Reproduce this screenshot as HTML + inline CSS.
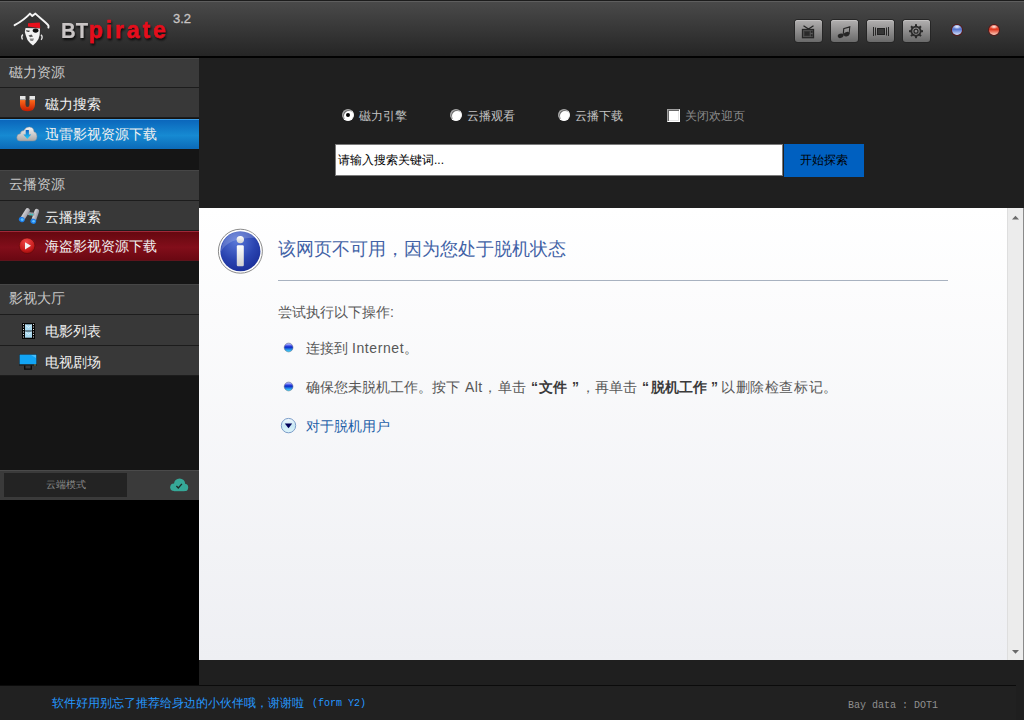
<!DOCTYPE html>
<html><head><meta charset="utf-8">
<style>
*{margin:0;padding:0;box-sizing:border-box}
html,body{width:1024px;height:720px;overflow:hidden;background:#1f1f1f;font-family:"Liberation Sans",sans-serif}
.a{position:absolute}
#title{left:0;top:0;width:1024px;height:56px;background:linear-gradient(#4a4a4a,#252525);border-top:1px solid #1c1c1c}
#title:before{content:"";position:absolute;left:0;top:0;right:0;height:1px;background:#5e5e5e}
#tline{left:0;top:56px;width:1024px;height:2px;background:#020202}
.btn{top:20px;width:27px;height:22px;border-radius:3px;background:linear-gradient(#b2b0b0,#6a6a6a);box-shadow:0 0 0 1px #262626,inset 0 1px 0 #c4c2c2}
.dot{width:10px;height:10px;border-radius:50%;top:25px}
#side{left:0;top:58px;width:199px;height:627px;background:#151515}
.hd{left:0;width:199px;height:30px;background:#3a3a3a;color:#c8c8c8;font-size:14px;line-height:27px;padding-left:9px;border-bottom:1px solid #1c1c1c;border-top:1px solid #464646}
.it{left:0;width:199px;height:30px;background:#383838;color:#f0f0f0;font-size:14px;font-weight:500;line-height:32px;padding-left:45px;border-bottom:1px solid #1c1c1c}
.ic{position:absolute;left:16px;top:7px}
#search{left:199px;top:58px;width:825px;height:150px;background:#1f1f1f}
.rad{width:12px;height:12px;border-radius:50%;background:#fff;border:1px solid;border-color:#a0a0a0 #f4f4f4 #fff #a0a0a0;box-shadow:inset 1px 1px 0 #6e6e6e;top:109px}
.lbl{top:109px;font-size:12px;color:#c4c4c4;line-height:14px}
#content{left:199px;top:208px;width:808px;height:452px;background:linear-gradient(#ffffff,#eeeff3)}
#scroll{left:1007px;top:208px;width:16px;height:452px;background:#ececec;border-left:1px solid #dedede}
#redge{left:1023px;top:208px;width:1px;height:452px;background:#8a8a8a}
.t14{font-size:14px;line-height:18px;color:#575757;white-space:nowrap}
.bq{font-weight:bold;color:#3a3a3a}
#status{left:0;top:685px;width:1016px;height:35px;background:#212121;border-top:1px solid #0b0b0b}
</style></head><body>
<div id="title" class="a"></div>
<div id="tline" class="a"></div>
<svg class="a" style="left:0;top:0" width="200" height="56" viewBox="0 0 200 56">
<defs><filter id="sh" x="-20%" y="-20%" width="140%" height="160%"><feDropShadow dx="1" dy="2" stdDeviation="1.2" flood-color="#000" flood-opacity="0.8"/></filter></defs>
<path d="M17,24.5 C21,22 26,18.5 30,15 L32.4,17.4 L35.4,15 C40,19 44,22 47,25.5 L40.5,30 L26,29 Z" fill="#343434"/>
<path d="M14.6,25.2 C19.5,22.5 25.5,18.5 30,13.6 L32.3,16 L35.4,13.6 C39.5,17.5 44.5,21.3 48,25 Q48.9,26 48.4,27.6" fill="none" stroke="#f4f4f4" stroke-width="1.9" stroke-linejoin="round" stroke-linecap="round"/>
<path d="M28,23.2 L39.8,22.6 L40.3,28.2 L28,26.6 Z" fill="#e8101c"/>
<path d="M25.5,28 L40,28.6 L39.6,35 L38.5,39 L36,42.5 L33,45.5 L30,43 L27.5,40 L26,36 L24.8,32 Z" fill="#f2f2f2"/>
<ellipse cx="35.6" cy="30.6" rx="2.9" ry="2.1" fill="#101010"/>
<path d="M26,30.2 L30,30.8 L29,32 L26.5,31.5Z" fill="#333"/>
<path d="M28.5,35.5 L31.5,34.5 L33,36.5 L30,37.2Z" fill="#555"/>
<path d="M29.5,38.5 L34,38.5 L33,41 L30.5,41Z" fill="#888"/>
<path d="M22.8,34.5 Q20.8,36.5 22.5,39.5" fill="none" stroke="#e8e8e8" stroke-width="1.3"/>
<path d="M41,34.8 Q43.2,37 41.2,39.8" fill="none" stroke="#e8e8e8" stroke-width="1.3"/>
<g filter="url(#sh)" font-family="Liberation Sans" font-weight="bold">
<text x="61" y="38" font-size="22" fill="#c9c5c5" textLength="27" lengthAdjust="spacingAndGlyphs">BT</text>
<text x="89" y="38" font-size="23" fill="#e5101c" stroke="#e5101c" stroke-width="0.5" textLength="77" lengthAdjust="spacing">pirate</text>
</g>
<text x="173" y="23" font-size="13" font-family="Liberation Sans" fill="#c8c4c4" stroke="#c8c4c4" stroke-width="0.3">3.2</text>
</svg>

<div class="a btn" style="left:795px"></div>
<div class="a btn" style="left:831px"></div>
<div class="a btn" style="left:867px"></div>
<div class="a btn" style="left:903px"></div>
<svg class="a" style="left:795px;top:20px" width="140" height="22" viewBox="795 20 140 22">
<g fill="#262626" stroke="#262626">
<path d="M803.5,25.8 L808.5,29 L813.5,25.8" fill="none" stroke-width="1.3"/>
<rect x="802.5" y="29.5" width="11" height="8.2" fill="#5a5a5a" stroke-width="1.3"/>
<rect x="804.2" y="31.2" width="5.6" height="4.8" stroke="#3a3a3a" stroke-width="0.8" fill="#2a2a2a"/>
<rect x="810.8" y="30.8" width="1.8" height="2" stroke="none"/>
<rect x="810.8" y="34.2" width="1.8" height="2.2" stroke="none"/>
</g>
<g fill="#262626">
<ellipse cx="840.6" cy="35.8" rx="2.9" ry="2.2" transform="rotate(-20 840.6 35.8)"/>
<ellipse cx="846.6" cy="34.2" rx="2.9" ry="2.2" transform="rotate(-20 846.6 34.2)"/>
<path d="M842.6,35.6 L843.2,28.2 L850.4,26 L849.6,34 L848.6,34 L849.2,27.8 L844.3,29 L843.7,35.6Z"/>
</g>
<g fill="#262626">
<rect x="873" y="27" width="1" height="9"/><rect x="875" y="27.5" width="1" height="8"/>
<rect x="886" y="27.5" width="1" height="8"/><rect x="888" y="27" width="1" height="9"/>
<rect x="877.5" y="28.5" width="7" height="6" fill="#363636" stroke="#222" stroke-width="1"/>
</g>
<g transform="translate(916 31.2)" fill="#2a2a2a">
<g id="tooth"><rect x="-1" y="-7" width="2" height="3"/></g>
<use href="#tooth" transform="rotate(45)"/><use href="#tooth" transform="rotate(90)"/><use href="#tooth" transform="rotate(135)"/>
<use href="#tooth" transform="rotate(180)"/><use href="#tooth" transform="rotate(225)"/><use href="#tooth" transform="rotate(270)"/><use href="#tooth" transform="rotate(315)"/>
<circle r="4.6" fill="none" stroke="#2a2a2a" stroke-width="1.8"/>
<circle r="2" fill="none" stroke="#2a2a2a" stroke-width="1.3"/>
</g>
</svg>
<div class="a dot" style="left:952px;background:radial-gradient(ellipse 40% 22% at 50% 18%,#f4f6ff,transparent),linear-gradient(#8aa2e8,#5a78d0 45%,#d8e0f8);box-shadow:0 0 0 1px #5a1818"></div>
<div class="a dot" style="left:989px;background:radial-gradient(ellipse 40% 22% at 50% 18%,#fff0ea,transparent),linear-gradient(#f06048,#e03a22 45%,#ffd0c0);box-shadow:0 0 0 1px #5a1818"></div>

<div id="side" class="a"></div>
<div class="a hd" style="top:58px;height:30px">磁力资源</div>
<div class="a it" style="top:88px">磁力搜索</div>
<div class="a it" style="top:118px;background:linear-gradient(#0a64ba,#168ad2 55%,#0c6ab8);box-shadow:inset 0 1px 0 #3e9ee6;border-bottom:none;border-top:1px solid #141414;height:31px;line-height:30px">迅雷影视资源下载</div>
<div class="a hd" style="top:170px;height:31px">云播资源</div>
<div class="a it" style="top:201px">云播搜索</div>
<div class="a it" style="top:231px;background:linear-gradient(#660810,#820e1a 55%,#6a0812);border-bottom:1px solid #5e141c;border-top:1px solid #a02838;height:30px;line-height:28px">海盗影视资源下载</div>
<div class="a hd" style="top:284px;height:31px">影视大厅</div>
<div class="a it" style="top:315px;height:31px">电影列表</div>
<div class="a it" style="top:346px">电视剧场</div>

<div class="a" style="left:0;top:470px;width:199px;height:30px;background:#3a3a3a;border-top:1px solid #4a4a4a"></div>
<div class="a" style="left:4px;top:473px;width:123px;height:24px;background:#232323;color:#8a8a8a;font-size:10px;line-height:24px;text-align:center">云端模式</div>
<div class="a" style="left:0;top:500px;width:199px;height:185px;background:#000"></div>

<svg class="a" style="left:0;top:58px" width="199" height="450" viewBox="0 58 199 450">
<defs>
<linearGradient id="mg" x1="0" y1="0" x2="0" y2="1"><stop offset="0" stop-color="#ff6a1a"/><stop offset="1" stop-color="#c41a00"/></linearGradient>
<linearGradient id="cg" x1="0" y1="0" x2="0" y2="1"><stop offset="0" stop-color="#f4f4f4"/><stop offset="1" stop-color="#a8a8a8"/></linearGradient>
<linearGradient id="ag" x1="0" y1="0" x2="0" y2="1"><stop offset="0" stop-color="#1060c0"/><stop offset="1" stop-color="#20d0ff"/></linearGradient>
<radialGradient id="pg" cx="0.45" cy="0.25" r="0.8"><stop offset="0" stop-color="#f04848"/><stop offset="0.7" stop-color="#c41a1a"/><stop offset="1" stop-color="#8a0a0a"/></radialGradient>
<linearGradient id="bg" x1="0" y1="0" x2="1" y2="1"><stop offset="0" stop-color="#e8e8e8"/><stop offset="1" stop-color="#8a8a96"/></linearGradient>
</defs>
<!-- magnet -->
<path d="M20,100 L25.5,100 L25.5,104.5 Q25.5,107 27.5,107 Q29.5,107 29.5,104.5 L29.5,100 L35,100 L35,104.5 Q35,111.2 27.5,111.2 Q20,111.2 20,104.5Z" fill="url(#mg)"/>
<rect x="20" y="96" width="5.5" height="4" fill="#e6e6e6"/><rect x="29.5" y="96" width="5.5" height="4" fill="#e6e6e6"/>
<rect x="20" y="99.2" width="5.5" height="0.9" fill="#9a9a9a"/><rect x="29.5" y="99.2" width="5.5" height="0.9" fill="#9a9a9a"/>
<!-- cloud -->
<path d="M20,141 Q16.8,141 16.8,137.5 Q16.8,134 20.3,133.8 Q20.8,130.6 24,130.6 Q25.5,126.8 29.5,127 Q33.8,127.3 34,131.8 Q37,132.5 37,136.5 Q37,141 33,141Z" fill="url(#cg)" stroke="#7a8a9a" stroke-width="0.5"/>
<path d="M25.7,130 L28.9,130 L28.9,134.4 L31.2,134.4 L27.3,139 L23.4,134.4 L25.7,134.4Z" fill="url(#ag)"/>
<!-- binoculars -->
<g>
<path d="M27.6,210.5 L22.4,218.8" stroke="url(#bg)" stroke-width="4.6" stroke-linecap="round"/>
<path d="M36.8,211.2 L33.6,220.6" stroke="url(#bg)" stroke-width="4.6" stroke-linecap="round"/>
<path d="M28,213.5 L34.5,214.2" stroke="#9a9aa4" stroke-width="3"/>
<circle cx="30.2" cy="214.4" r="0.9" fill="#30c8c0"/><circle cx="32.4" cy="214.7" r="0.9" fill="#30c8c0"/>
<ellipse cx="21.8" cy="219.5" rx="3" ry="2.6" fill="#1e7ee8" transform="rotate(30 21.8 219.5)"/>
<ellipse cx="22.2" cy="219.6" rx="1.5" ry="1.3" fill="#60c0ff"/>
<ellipse cx="33.3" cy="221.2" rx="2.9" ry="2.6" fill="#1e7ee8" transform="rotate(15 33.3 221.2)"/>
<ellipse cx="33.6" cy="221.3" rx="1.4" ry="1.3" fill="#60c0ff"/>
</g>
<!-- play -->
<circle cx="27.1" cy="245.8" r="7.8" fill="url(#pg)" stroke="#5a0808" stroke-width="0.6"/>
<path d="M25,242.2 L25,249.4 L31,245.8Z" fill="#f4f4f4"/>
<!-- film -->
<rect x="22" y="323" width="13" height="16" fill="#050505"/>
<rect x="25" y="324.3" width="7" height="6.3" fill="#a8d8ee"/><rect x="25" y="331.4" width="7" height="6.3" fill="#a8d8ee"/>
<path d="M25.5,325 L28.5,327.5 L31.5,325 M25.5,332 L28.5,334.5 L31.5,332" stroke="#eaf6ff" stroke-width="0.8" fill="none"/>
<g fill="#ddd"><rect x="23" y="324" width="1" height="1"/><rect x="23" y="326.5" width="1" height="1"/><rect x="23" y="329" width="1" height="1"/><rect x="23" y="331.5" width="1" height="1"/><rect x="23" y="334" width="1" height="1"/><rect x="23" y="336.5" width="1" height="1"/>
<rect x="33" y="324" width="1" height="1"/><rect x="33" y="326.5" width="1" height="1"/><rect x="33" y="329" width="1" height="1"/><rect x="33" y="331.5" width="1" height="1"/><rect x="33" y="334" width="1" height="1"/><rect x="33" y="336.5" width="1" height="1"/></g>
<!-- monitor -->
<rect x="19" y="354.3" width="18" height="11.5" fill="#222"/>
<rect x="19.6" y="354.6" width="16.8" height="9.6" fill="#12a4f4"/>
<path d="M31,355 L36,355 L36,358 Z" fill="#6cd0ff" opacity="0.6"/>
<rect x="34.5" y="364.5" width="1" height="1" fill="#c8c040"/>
<path d="M24,365.5 L24,369.8 L32,369.8 L32,365.5 L30.6,365.5 L30.6,368.4 L25.4,368.4 L25.4,365.5Z" fill="#0a0a0a"/>
<!-- cloud check -->
<g fill="#36a898">
<circle cx="179.6" cy="484" r="5.6"/><circle cx="174" cy="487.2" r="3.8"/><circle cx="184.6" cy="487.4" r="3.6"/>
<rect x="174" y="486" width="10.6" height="5.2"/>
</g>
<path d="M176.4,486 L178.3,488 L181.9,483.8" stroke="#1c2a28" stroke-width="1.3" fill="none"/>
</svg>
<div id="search" class="a"></div>
<div class="a rad" style="left:342px"><div style="position:absolute;left:3px;top:3px;width:4px;height:4px;border-radius:50%;background:#000"></div></div>
<div class="a lbl" style="left:359px">磁力引擎</div>
<div class="a rad" style="left:450px"></div>
<div class="a lbl" style="left:467px">云播观看</div>
<div class="a rad" style="left:558px"></div>
<div class="a lbl" style="left:575px">云播下载</div>
<div class="a" style="left:667px;top:109px;width:13px;height:13px;background:#fff;border:1px solid;border-color:#a0a0a0 #fff #fff #a0a0a0;box-shadow:inset 1px 1px 0 #696969,inset -1px -1px 0 #e3e3e3"></div>
<div class="a lbl" style="left:685px;color:#8a8a8a">关闭欢迎页</div>
<div class="a" style="left:335px;top:144px;width:448px;height:32px;background:#fff;border:1px solid #7a7a7a;font-size:12px;line-height:30px;padding-left:2px;color:#000">请输入搜索关键词...</div>
<div class="a" style="left:784px;top:144px;width:80px;height:33px;background:#0060c0;font-size:12px;line-height:33px;text-align:center;color:#000">开始探索</div>

<div id="content" class="a"></div>
<div id="scroll" class="a"></div>
<div id="redge" class="a"></div>
<svg class="a" style="left:199px;top:208px" width="825" height="452" viewBox="199 208 825 452">
<defs>
<radialGradient id="ig" cx="0.4" cy="0.25" r="0.8"><stop offset="0" stop-color="#5a78d8"/><stop offset="0.6" stop-color="#2a44b0"/><stop offset="1" stop-color="#1a2e98"/></radialGradient>
<linearGradient id="ib" x1="0" y1="0" x2="0" y2="1"><stop offset="0" stop-color="#ffffff"/><stop offset="1" stop-color="#d0d0d0"/></linearGradient>
<linearGradient id="bu" x1="0" y1="0" x2="0" y2="1"><stop offset="0.1" stop-color="#b4b8ff"/><stop offset="0.3" stop-color="#4a58e8"/><stop offset="0.45" stop-color="#0a24c8"/><stop offset="0.95" stop-color="#40dcff"/></linearGradient>
<linearGradient id="ar" x1="0" y1="0" x2="0" y2="1"><stop offset="0" stop-color="#f4faff"/><stop offset="0.5" stop-color="#c8e8f4"/><stop offset="1" stop-color="#e0f6fc"/></linearGradient>
</defs>
<circle cx="240.4" cy="251.2" r="22" fill="#fff" stroke="#8a8a8a" stroke-width="1"/>
<circle cx="240.4" cy="251.2" r="20" fill="url(#ig)"/>
<path d="M221,252 Q228,236 262,238 Q256,228 240.4,231 Q222,234 221,252Z" fill="#fff" opacity="0.18"/>
<circle cx="240.3" cy="239.6" r="3.7" fill="url(#ib)"/>
<rect x="236.8" y="245.3" width="7" height="21" rx="1.2" fill="url(#ib)"/>
<rect x="278" y="280" width="670" height="1" fill="#a8b2c0"/>
<circle cx="288.6" cy="347.5" r="4.4" fill="url(#bu)" stroke="#56607a" stroke-width="0.5"/>
<circle cx="288.6" cy="386.5" r="4.4" fill="url(#bu)" stroke="#56607a" stroke-width="0.5"/>
<circle cx="288.5" cy="425.6" r="7.2" fill="url(#ar)" stroke="#7a9cc8" stroke-width="1"/>
<path d="M284.8,423.6 L292.2,423.6 L288.5,428.2Z" fill="#000058"/>
<path d="M1012,219.5 L1015.5,215.8 L1019,219.5Z" fill="#6a6a6a"/>
<path d="M1012,650 L1015.5,653.8 L1019,650Z" fill="#6a6a6a"/>
</svg>
<div class="a" style="left:278px;top:237px;font-size:18px;line-height:24px;color:#4262a6;white-space:nowrap">该网页不可用，因为您处于脱机状态</div>
<div class="a t14" style="left:278px;top:303px">尝试执行以下操作:</div>
<div class="a t14" style="left:306px;top:339px">连接到 <span style="letter-spacing:0.6px">Internet</span>。</div>
<div class="a t14" style="left:306px;top:378px">确保您未脱机工作。按下</div>
<div class="a t14" style="left:465px;top:378px;letter-spacing:0.4px">Alt</div>
<div class="a t14" style="left:483px;top:378px">，</div>
<div class="a t14" style="left:498px;top:378px">单击</div>
<div class="a t14 bq" style="left:531px;top:378px">“</div>
<div class="a t14 bq" style="left:539px;top:378px">文件</div>
<div class="a t14 bq" style="left:572px;top:378px">”</div>
<div class="a t14" style="left:581px;top:378px">，</div>
<div class="a t14" style="left:595px;top:378px">再单击</div>
<div class="a t14 bq" style="left:642px;top:378px">“</div>
<div class="a t14 bq" style="left:651px;top:378px">脱机工作</div>
<div class="a t14 bq" style="left:711px;top:378px">”</div>
<div class="a t14" style="left:721px;top:378px;letter-spacing:0.6px">以删除检查标记。</div>
<div class="a t14" style="left:306px;top:417px;color:#1e5fa8">对于脱机用户</div>

<div id="status" class="a"></div>
<div class="a" style="left:52px;top:696px;font-size:12px;color:#2598ff;line-height:14px">软件好用别忘了推荐给身边的小伙伴哦，谢谢啦</div>
<div class="a" style="left:312px;top:697px;font-size:10px;color:#2598ff;line-height:14px;font-family:'Liberation Mono',monospace">(form Y2)</div>
<div class="a" style="left:848px;top:700px;font-size:10px;color:#909090;font-family:'Liberation Mono',monospace;line-height:12px">Bay data : DOT1</div>
</body></html>
